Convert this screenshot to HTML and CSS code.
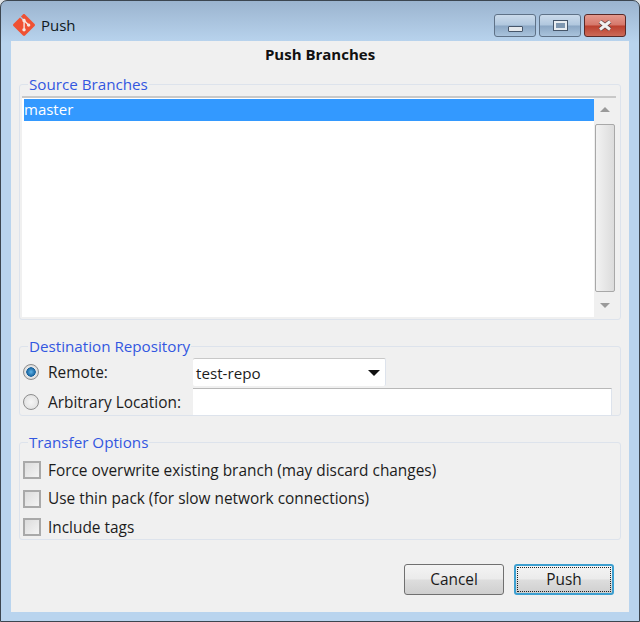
FILE: index.html
```html
<!DOCTYPE html>
<html lang="en">
<head>
    <meta charset="UTF-8">
    <title>Push</title>
    <link rel="stylesheet" href="styles.css">
</head>
<body>
    <div class="window">
        <div class="titlebar">
            <svg class="app-icon" viewBox="0 0 24 24"><path fill="#f7e6e0" d="M12 4l8 8-8 8-8-8z"/><path fill="#f05133" d="M23.546 10.93L13.067.452c-.604-.603-1.582-.603-2.188 0L8.708 2.627l2.76 2.76c.645-.215 1.379-.07 1.889.441.516.515.658 1.258.438 1.9l2.658 2.66c.645-.223 1.387-.078 1.9.435.721.72.721 1.884 0 2.604-.719.719-1.881.719-2.6 0-.539-.541-.674-1.337-.404-1.996L12.86 8.955v6.525c.176.086.342.203.488.348.713.721.713 1.883 0 2.6-.719.721-1.889.721-2.609 0-.719-.719-.719-1.879 0-2.598.182-.18.387-.316.605-.406V8.835c-.217-.091-.424-.222-.6-.401-.545-.545-.676-1.342-.396-2.009L7.636 3.7.45 10.881c-.6.605-.6 1.584 0 2.189l10.48 10.477c.604.604 1.582.604 2.186 0l10.43-10.43c.605-.603.605-1.582 0-2.187"/></svg>
            <span class="title">Push</span>
            <div class="controls">
                <div class="control"><span class="glyph-min"></span></div>
                <div class="control"><span class="glyph-max"></span></div>
                <div class="control close">
                    <svg class="glyph-close" viewBox="0 0 14 11"><path d="M2 1.5l10 8M12 1.5l-10 8" fill="none" stroke="#5b3a38" stroke-width="4.4"/><path d="M2 1.5l10 8M12 1.5l-10 8" fill="none" stroke="#f1f1f1" stroke-width="3"/></svg>
                </div>
            </div>
        </div>

        <div class="dialog">
            <h1 class="heading">Push Branches</h1>

            <fieldset class="group source">
                <legend>Source Branches</legend>
                <div class="list">
                    <div class="rows">
                        <div class="row selected">master</div>
                    </div>
                    <div class="scrollbar">
                        <span class="arrow up"></span>
                        <span class="thumb"></span>
                        <span class="arrow down"></span>
                    </div>
                </div>
            </fieldset>

            <fieldset class="group destination">
                <legend>Destination Repository</legend>
                <div class="dest-row">
                    <label class="option"><span class="radio checked"></span>Remote:</label>
                    <div class="combo">test-repo<span class="combo-arrow"></span></div>
                </div>
                <div class="dest-row">
                    <label class="option"><span class="radio"></span>Arbitrary Location:</label>
                    <div class="textfield"></div>
                </div>
            </fieldset>

            <fieldset class="group transfer">
                <legend>Transfer Options</legend>
                <label class="check"><span class="checkbox"></span>Force overwrite existing branch (may discard changes)</label>
                <label class="check"><span class="checkbox"></span>Use thin pack (for slow network connections)</label>
                <label class="check"><span class="checkbox"></span>Include tags</label>
            </fieldset>

            <div class="actions">
                <div class="button">Cancel</div>
                <div class="button default"><span class="focus">Push</span></div>
            </div>
        </div>
    </div>
</body>
</html>
```

FILE: styles.css
```css
* {
    box-sizing: border-box;
}

body {
    margin: 0;
    width: 640px;
    height: 622px;
    overflow: hidden;
    background: #dfe3e6;
    font-family: "Open Sans", "Noto Sans", sans-serif;
    font-size: 15.4px;
    color: #1c1c1c;
}

.window {
    width: 640px;
    height: 622px;
    padding: 0 10px 9px 10px;
    border: 1px solid #3c4650;
    border-radius: 7px 7px 0 0;
    background: linear-gradient(to bottom, #9bb4cf 0, #b9d4ee 42px, #b9d4ee 100%);
    display: flex;
    flex-direction: column;
}

.titlebar {
    height: 40px;
    flex: none;
    display: flex;
    align-items: center;
    padding-top: 8px;
    margin-right: 3px;
}

.app-icon {
    width: 22px;
    height: 22px;
    margin: 0 6px 0 2px;
}

.title {
    font-size: 15px;
    color: #101820;
}

.controls {
    margin-left: auto;
    align-self: flex-start;
    margin-top: 5px;
    display: flex;
    gap: 3px;
}

.control {
    width: 42px;
    height: 23px;
    border: 1px solid #5f7287;
    border-radius: 3px;
    background: linear-gradient(to bottom, #cbdbeb 0, #b0c7de 48%, #8ba7c4 52%, #a9c3dc 100%);
    display: flex;
    align-items: center;
    justify-content: center;
}

.control.close {
    border-color: #5a2a28;
    background: linear-gradient(to bottom, #e59a8e 0, #d5776a 48%, #bb3f2e 52%, #cc6a58 100%);
}

.glyph-min {
    width: 15px;
    height: 6px;
    margin-top: 7px;
    border: 1px solid #46566a;
    border-radius: 1px;
    background: #e4e8ec;
}

.glyph-max {
    width: 13px;
    height: 9px;
    border: 2px solid #e9edf1;
    outline: 1px solid #46566a;
    background: #7f97b0;
}

.glyph-close {
    width: 14px;
    height: 11px;
}

.dialog {
    flex: 1;
    background: #f0f0f0;
    padding: 0 8px;
    display: flex;
    flex-direction: column;
}

.heading {
    margin: 3px 0 0;
    height: 21px;
    font-size: 15px;
    line-height: 21px;
    font-weight: 700;
    text-align: center;
    color: #111;
}

.group {
    margin: 0;
    padding: 0 2px;
    min-width: 0;
    border: 1px solid #dde3ec;
    border-radius: 3px;
}

.group legend {
    margin-left: 6px;
    padding: 0 1px;
    font-size: 15.2px;
    line-height: 22px;
    color: #3357e0;
}

.source {
    height: 247px;
    margin-top: 8px;
}

.destination {
    height: 81px;
    margin-top: 15px;
}

.transfer {
    height: 109px;
    margin-top: 15px;
    padding-top: 3px;
}

.list {
    height: 221px;
    margin-top: 1px;
    margin-right: 2px;
    border-top: 2px solid #c8c8c8;
    background: #fff;
    display: flex;
}

.rows {
    flex: 1;
    padding: 1px 0 0 2px;
}

.row {
    height: 22px;
    line-height: 20px;
    font-size: 15px;
}

.row.selected {
    background: #3399ff;
    color: #fff;
}

.scrollbar {
    width: 22px;
    flex: none;
    background: #f0f0f0;
    display: flex;
    flex-direction: column;
    align-items: center;
}

.arrow {
    width: 0;
    height: 0;
    border-left: 5px solid transparent;
    border-right: 5px solid transparent;
}

.arrow.up {
    margin-top: 9px;
    border-bottom: 5px solid #9a9a9a;
}

.arrow.down {
    margin-top: 11px;
    border-top: 5px solid #9a9a9a;
}

.thumb {
    width: 20px;
    height: 168px;
    margin-top: 12px;
    border: 1px solid #a8a8a8;
    border-radius: 2px;
    background: linear-gradient(to right, #f2f2f2, #dcdcdc);
}

.dest-row {
    display: flex;
    align-items: center;
    height: 28px;
    margin-top: 1px;
    padding-right: 6px;
}

.dest-row + .dest-row {
    margin-top: 2px;
}

.option {
    width: 171px;
    flex: none;
    display: flex;
    align-items: center;
}

.radio {
    width: 16px;
    height: 16px;
    margin: 0 9px 0 1px;
    border: 1px solid #8d8d8d;
    border-radius: 50%;
    background: radial-gradient(circle, #f6f6f6 0, #dcdcdc 100%);
}

.radio.checked {
    background: radial-gradient(circle, #5fb4e8 0, #15609c 45%, #e8e8e8 50%, #c8c8c8 100%);
}

.combo {
    width: 193px;
    height: 28px;
    padding-left: 3px;
    font-size: 15.2px;
    border-top: 1px solid #c8c8c8;
    border-right: 1px solid #dde3ec;
    border-radius: 2px;
    background: #fff;
    display: flex;
    align-items: center;
    justify-content: space-between;
}

.combo-arrow {
    width: 0;
    height: 0;
    margin-right: 5px;
    border-left: 6px solid transparent;
    border-right: 6px solid transparent;
    border-top: 6px solid #111;
}

.textfield {
    flex: 1;
    height: 28px;
    border-top: 1px solid #b8b8b8;
    border-right: 1px solid #dde3ec;
    border-bottom: 1px solid #dde3ec;
    background: #fff;
}

.check {
    height: 28.5px;
    display: flex;
    align-items: center;
}

.checkbox {
    width: 18px;
    height: 18px;
    margin: 0 7px 0 1px;
    border: 2px solid #a9a9a9;
    background: linear-gradient(135deg, #dcdcdc, #f4f4f4);
}

.actions {
    display: flex;
    justify-content: flex-end;
    gap: 10px;
    margin-top: 24px;
    padding-right: 7px;
}

.button {
    width: 100px;
    height: 31px;
    border: 1px solid #707070;
    border-radius: 3px;
    background: linear-gradient(to bottom, #f4f4f4 0, #ebebeb 48%, #dddddd 52%, #cfcfcf 100%);
    display: flex;
    align-items: center;
    justify-content: center;
    color: #1a1a1a;
}

.button.default {
    border: 2px solid #3c9fd0;
    padding: 1px;
}

.focus {
    width: 100%;
    height: 100%;
    border: 1px dotted #222;
    text-align: center;
    line-height: 23px;
}
```
